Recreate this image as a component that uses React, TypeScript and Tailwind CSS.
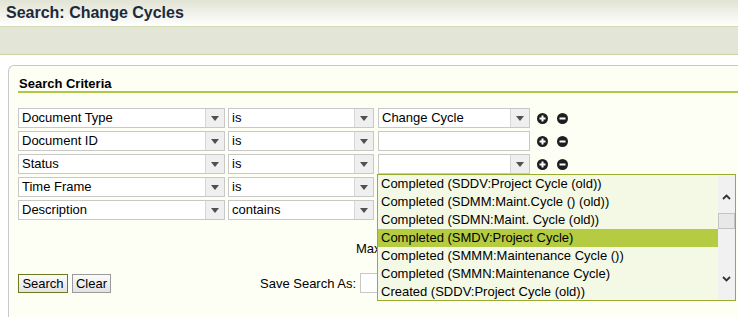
import React from "react";

const Arrow = () => (
  <svg width="8" height="5" viewBox="0 0 8 5">
    <path d="M0 0 L8 0 L4 5 Z" fill="#505050" />
  </svg>
);

const Select = ({ text, w }: { text: string; w: string }) => (
  <div className={`flex h-[20px] border border-[#c8c8c8] bg-white ${w}`}>
    <div className="flex-1 pl-[3px] text-[13px] leading-[18px] text-black whitespace-nowrap overflow-hidden">{text}</div>
    <div className="w-[19px] bg-[#efefef] border-l border-[#d6d6d6] flex items-center justify-center">
      <Arrow />
    </div>
  </div>
);

const Input = ({ w }: { w: string }) => (
  <div className={`h-[20px] border border-[#c8c8c8] bg-white ${w}`} />
);

const Plus = () => (
  <svg width="11" height="11" viewBox="0 0 11 11">
    <circle cx="5.5" cy="5.5" r="5.5" fill="#1e1e1e" />
    <path d="M2.5 5.5 H8.5 M5.5 2.5 V8.5" stroke="#fff" strokeWidth="2" />
  </svg>
);

const Minus = () => (
  <svg width="11" height="11" viewBox="0 0 11 11">
    <circle cx="5.5" cy="5.5" r="5.5" fill="#1e1e1e" />
    <path d="M2.5 5.5 H8.5" stroke="#fff" strokeWidth="2" />
  </svg>
);

const Icons = () => (
  <div className="flex items-center gap-[9px] ml-[7px]">
    <Plus />
    <Minus />
  </div>
);

const items = [
  "Completed (SDDV:Project Cycle (old))",
  "Completed (SDMM:Maint.Cycle () (old))",
  "Completed (SDMN:Maint. Cycle (old))",
  "Completed (SMDV:Project Cycle)",
  "Completed (SMMM:Maintenance Cycle ())",
  "Completed (SMMN:Maintenance Cycle)",
  "Created (SDDV:Project Cycle (old))",
];

const Dropdown = () => (
  <div className="absolute left-[-1px] top-full z-10 w-[359px] h-[127px] border border-[#9aab2e] bg-[#f4f9e6] flex">
    <div className="flex-1 flex flex-col overflow-hidden">
      {items.map((t, i) => (
        <div
          key={t}
          className={`h-[18px] shrink-0 pl-[3px] text-[13px] leading-[18px] text-black whitespace-nowrap ${
            i === 3 ? "bg-[#b4cb42]" : ""
          }`}
        >
          {t}
        </div>
      ))}
    </div>
    <div className="w-[17px] bg-[#f1f1f1] flex flex-col">
      <div className="h-[13px]" />
      <div className="h-[17px] flex items-center justify-center">
        <svg width="9" height="6" viewBox="0 0 9 6">
          <path d="M1 5 L4.5 1.5 L8 5" stroke="#333" strokeWidth="1.8" fill="none" />
        </svg>
      </div>
      <div className="h-[8px]" />
      <div className="h-[16px] bg-[#e8e8e8] border border-[#c4c4c4]" />
      <div className="flex-1" />
      <div className="h-[17px] flex items-center justify-center">
        <svg width="9" height="6" viewBox="0 0 9 6">
          <path d="M1 1 L4.5 4.5 L8 1" stroke="#333" strokeWidth="1.8" fill="none" />
        </svg>
      </div>
      <div className="h-[13px]" />
    </div>
  </div>
);

export default function App() {
  return (
    <div className="w-[738px] h-[317px] overflow-hidden bg-white font-['Liberation_Sans',Arial,sans-serif] text-black">
      <div className="h-[27px] bg-gradient-to-b from-[#e1e3d3] to-white border-b border-[#d3dbb5] flex items-center px-[6px]">
        <span className="text-[16px] font-bold text-[#1c2a3a] leading-none">Search: Change Cycles</span>
      </div>
      <div className="h-[28px] bg-[#e3e5d7] border-b border-[#cad5a6]" />
      <div className="mt-[10px] ml-[8px] h-[252px] border-t border-l border-[#c8c8c8] rounded-tl-[6px] bg-[#fdfff4] pt-[10px] pl-[9px]">
        <div className="border-b-2 border-[#adc844] text-[13px] leading-[15px] font-bold pl-[1px] text-black">
          Search Criteria
        </div>
        <div className="mt-[15px] flex flex-col gap-[3px]">
          <div className="flex items-center h-[20px]">
            <Select text="Document Type" w="w-[207px]" />
            <div className="ml-[3px]"><Select text="is" w="w-[146px]" /></div>
            <div className="ml-[4px]"><Select text="Change Cycle" w="w-[152px]" /></div>
            <Icons />
          </div>
          <div className="flex items-center h-[20px]">
            <Select text="Document ID" w="w-[207px]" />
            <div className="ml-[3px]"><Select text="is" w="w-[146px]" /></div>
            <div className="ml-[4px]"><Input w="w-[152px]" /></div>
            <Icons />
          </div>
          <div className="flex items-center h-[20px]">
            <Select text="Status" w="w-[207px]" />
            <div className="ml-[3px]"><Select text="is" w="w-[146px]" /></div>
            <div className="ml-[4px] relative">
              <Select text="" w="w-[152px]" />
              <Dropdown />
            </div>
            <Icons />
          </div>
          <div className="flex items-center h-[20px]">
            <Select text="Time Frame" w="w-[207px]" />
            <div className="ml-[3px]"><Select text="is" w="w-[146px]" /></div>
            <div className="ml-[4px]"><Input w="w-[152px]" /></div>
            <Icons />
          </div>
          <div className="flex items-center h-[20px]">
            <Select text="Description" w="w-[207px]" />
            <div className="ml-[3px]"><Select text="contains" w="w-[146px]" /></div>
            <div className="ml-[4px]"><Input w="w-[152px]" /></div>
            <Icons />
          </div>
        </div>
        <div className="mt-[20px] h-[17px] pl-[338px] flex items-center text-[13px] leading-[17px]">
          <span>Max</span>
        </div>
        <div className="mt-[16px] flex items-center">
          <button className="w-[50px] h-[19px] border border-[#6b7a1f] bg-gradient-to-b from-[#fbfbfb] to-[#e3e3e3] text-[13px] leading-[17px] text-black">
            Search
          </button>
          <button className="ml-[4px] w-[39px] h-[19px] border border-[#9a9a9a] bg-gradient-to-b from-[#fbfbfb] to-[#e3e3e3] text-[13px] leading-[17px] text-black">
            Clear
          </button>
          <span className="ml-[149px] text-[13px] leading-[17px]">Save Search As:</span>
          <div className="ml-[4px] h-[20px] w-[150px] border border-[#c8c8c8] bg-white" />
        </div>
      </div>
    </div>
  );
}
